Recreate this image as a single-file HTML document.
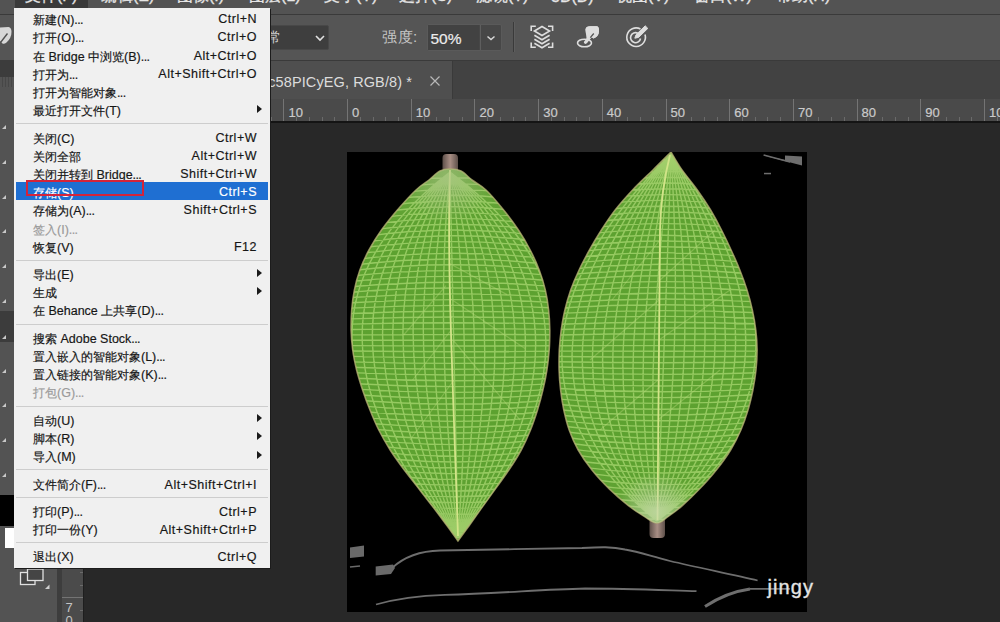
<!DOCTYPE html>
<html><head><meta charset="utf-8">
<style>
*{margin:0;padding:0;box-sizing:border-box}
html,body{width:1000px;height:622px;overflow:hidden;background:#282828;font-family:"Liberation Sans",sans-serif}
.a{position:absolute}
#menubar{left:0;top:0;width:1000px;height:15px;background:#535353;border-bottom:1px solid #3a3a3a}
#menubar span{position:absolute;top:-14px;font-size:16px;color:#e6e6e6;white-space:nowrap;-webkit-text-stroke:.3px #e6e6e6}
#opts{left:0;top:15px;width:1000px;height:45px;background:#555555}
#tabbar{left:62px;top:60px;width:938px;height:39px;background:#424242;border-top:1px solid #3a3a3a}
#tab{left:62px;top:61px;width:391px;height:38px;background:#4f4f4f;border-right:1px solid #3a3a3a}
#hruler{left:62px;top:99px;width:938px;height:24px;background:#4a4a4a;border-bottom:2px solid #141414;overflow:hidden}
.rl{position:absolute;top:6px;font-size:13px;color:#cbcbcb;-webkit-text-stroke:.2px #cbcbcb}
#toolbar{left:0;top:60px;width:57px;height:562px;background:#535353}
#tbhead{left:0;top:60px;width:57px;height:17px;background:#3c3c3c}
#vstrip{left:57px;top:60px;width:5px;height:562px;background:#3d3d3d}
#vruler{left:62px;top:122px;width:22px;height:500px;background:#4b4b4b;border-right:1px solid #1e1e1e;overflow:hidden}
.vl{position:absolute;left:2px;font-size:13px;line-height:13px;color:#c4c4c4;text-align:center;width:10px}
#canvas{left:347px;top:152px;width:460px;height:460px;background:#000;overflow:hidden}
#menu{left:14px;top:8px;width:256px;height:560px;background:#f0f0f0;box-shadow:1px 1px 0 #1c1c1c;font-size:12px;color:#161616;padding-top:1.3px}
.it{position:relative;height:18.2px;line-height:22px;padding-left:19px;white-space:nowrap;-webkit-text-stroke:.18px currentColor}
.it b{font-weight:normal;position:absolute;right:13px;top:-1px}
.it i{font-style:normal;font-size:12.5px}
.it b i{letter-spacing:.5px}
.it u{text-decoration:none;letter-spacing:-.6px}
.sep{height:9.2px;position:relative}
.sep:after{content:"";position:absolute;left:2px;right:2px;top:5px;height:1px;background:#cdcdcd}
.dis{color:#9a9a9a}
.hl{background:#1f6fd2;color:#fff;margin-left:2px;margin-right:2px;padding-left:17px}
.hl b{right:11px}
.lo b{top:0}
.arr{position:absolute;right:8px;top:4.5px;width:0;height:0;border-left:5px solid #1a1a1a;border-top:4px solid transparent;border-bottom:4px solid transparent}
.ico{position:absolute}
</style></head><body>
<div id="menubar" class="a">
 <div class="a" style="left:15px;top:0;width:73px;height:8px;background:#3a3a3a"></div>
 <span style="left:25px">文件(F)</span>
 <span style="left:101px">编辑(E)</span>
 <span style="left:177px">图像(I)</span>
 <span style="left:249px">图层(L)</span>
 <span style="left:324px">文字(Y)</span>
 <span style="left:399px">选择(S)</span>
 <span style="left:476px">滤镜(T)</span>
 <span style="left:551px;top:-12px">3D(D)</span>
 <span style="left:616px">视图(V)</span>
 <span style="left:694px">窗口(W)</span>
 <span style="left:776px">帮助(H)</span>
</div>
<div id="opts" class="a">
 <div class="a" style="left:200px;top:9.5px;width:129px;height:25px;background:#3e3e3e;border:1px solid #484848;border-radius:2px"></div>
 <span class="a" style="left:267px;top:14px;font-size:14px;color:#d0d0d0">常</span>
 <svg class="a" style="left:314px;top:19px" width="12" height="8" viewBox="0 0 12 8"><path d="M2,2 L6,6 L10,2" fill="none" stroke="#e0e0e0" stroke-width="1.6"/></svg>
 <span class="a" style="left:382px;top:13px;font-size:15px;color:#c8c8c8;letter-spacing:.5px">强度:</span>
 <div class="a" style="left:427px;top:9px;width:75px;height:27px;background:#474747;border:1px solid #5a5a5a;border-radius:2px"></div>
 <div class="a" style="left:428px;top:10px;width:51px;height:25px;background:#424242"></div>
 <div class="a" style="left:480px;top:10px;width:1px;height:25px;background:#5e5e5e"></div>
 <span class="a" style="left:430.5px;top:15px;font-size:15.5px;color:#ececec;-webkit-text-stroke:.2px #ececec">50%</span>
 <svg class="a" style="left:485px;top:19px" width="12" height="8" viewBox="0 0 12 8"><path d="M2.5,2.5 L6,5.5 L9.5,2.5" fill="none" stroke="#d8d8d8" stroke-width="1.5"/></svg>
 <div class="a" style="left:513px;top:7px;width:1px;height:30px;background:#3a3a3a"></div>
 <div class="a" style="left:514px;top:7px;width:1px;height:30px;background:#5e5e5e"></div>
</div>
<svg class="a" style="left:520px;top:18px" width="140" height="36" viewBox="520 18 140 36" fill="none" stroke="#dedede" stroke-width="1.6">
 <path d="M531.2,31 V26.3 H535.8 M548,26.3 H552.6 V31 M552.6,42.6 V47.3 H548 M535.8,47.3 H531.2 V42.6"/>
 <path d="M542,26.5 L549.6,31 L542,35.5 L534.4,31 Z"/>
 <path d="M534.4,35.2 L542,39.7 L549.6,35.2"/>
 <path d="M534.4,39.2 L542,43.7 L549.6,39.2"/>
 <path d="M534.4,43.2 L542,47.7 L549.6,43.2"/>
 <ellipse cx="584.5" cy="43" rx="7" ry="3.8"/>
 <path d="M585.5,29.5 Q586,26.3 590,26.3 L596.5,26.3 Q599.2,26.5 599,31 Q598.8,36.5 593.5,38.5 L591.5,37 L587,42.8" fill="#dedede" stroke="none"/>
 <path d="M585.5,29.5 Q586,26.3 590,26.3 L596.5,26.3 Q599.2,26.5 599,31 Q598.8,36.5 593.5,38.5 Q590,36 586,34 Z" fill="#dedede" stroke="none"/>
 <path d="M594.5,31.5 L585.5,42.3" stroke-width="3.2" stroke-linecap="round"/>
 <path d="M590.3,37.6 Q592.5,35 593.8,33.5" stroke="#535353" stroke-width="1.2"/>
 <path d="M640.5,29 A9.3,9.3 0 1 0 645,34.5"/>
 <path d="M637.8,33.2 A5,5 0 1 0 640.5,38.5"/>
 <path d="M634.8,38.2 L636,34.8 L645.2,25.8 L647.8,28.4 L638.6,37.4 Z" fill="#dedede" stroke-width="1"/>
</svg>
<div id="tabbar" class="a"></div>
<div id="tab" class="a">
 <span class="a" style="right:40px;top:12.5px;font-size:14.5px;color:#dcdcdc;letter-spacing:.1px;white-space:nowrap">20180502c58PICyEG, RGB/8) *</span>
 <svg class="a" style="left:367px;top:14px" width="12" height="12" viewBox="0 0 12 12"><path d="M1.5,1.5 L10.5,10.5 M10.5,1.5 L1.5,10.5" stroke="#b8b8b8" stroke-width="1.2"/></svg>
</div>
<div id="hruler" class="a">
<div class="a" style="left:208.67px;top:18px;width:1px;height:4px;background:#6a6a6a"></div>
<div class="a" style="left:221.41px;top:0;width:1px;height:22px;background:#747474"></div>
<span class="rl" style="left:226.41px">10</span>
<div class="a" style="left:234.15px;top:18px;width:1px;height:4px;background:#6a6a6a"></div>
<div class="a" style="left:246.89px;top:18px;width:1px;height:4px;background:#6a6a6a"></div>
<div class="a" style="left:259.62px;top:18px;width:1px;height:4px;background:#6a6a6a"></div>
<div class="a" style="left:272.36px;top:18px;width:1px;height:4px;background:#6a6a6a"></div>
<div class="a" style="left:285.10px;top:0;width:1px;height:22px;background:#747474"></div>
<span class="rl" style="left:290.10px">0</span>
<div class="a" style="left:297.84px;top:18px;width:1px;height:4px;background:#6a6a6a"></div>
<div class="a" style="left:310.58px;top:18px;width:1px;height:4px;background:#6a6a6a"></div>
<div class="a" style="left:323.31px;top:18px;width:1px;height:4px;background:#6a6a6a"></div>
<div class="a" style="left:336.05px;top:18px;width:1px;height:4px;background:#6a6a6a"></div>
<div class="a" style="left:348.79px;top:0;width:1px;height:22px;background:#747474"></div>
<span class="rl" style="left:353.79px">10</span>
<div class="a" style="left:361.53px;top:18px;width:1px;height:4px;background:#6a6a6a"></div>
<div class="a" style="left:374.27px;top:18px;width:1px;height:4px;background:#6a6a6a"></div>
<div class="a" style="left:387.00px;top:18px;width:1px;height:4px;background:#6a6a6a"></div>
<div class="a" style="left:399.74px;top:18px;width:1px;height:4px;background:#6a6a6a"></div>
<div class="a" style="left:412.48px;top:0;width:1px;height:22px;background:#747474"></div>
<span class="rl" style="left:417.48px">20</span>
<div class="a" style="left:425.22px;top:18px;width:1px;height:4px;background:#6a6a6a"></div>
<div class="a" style="left:437.96px;top:18px;width:1px;height:4px;background:#6a6a6a"></div>
<div class="a" style="left:450.69px;top:18px;width:1px;height:4px;background:#6a6a6a"></div>
<div class="a" style="left:463.43px;top:18px;width:1px;height:4px;background:#6a6a6a"></div>
<div class="a" style="left:476.17px;top:0;width:1px;height:22px;background:#747474"></div>
<span class="rl" style="left:481.17px">30</span>
<div class="a" style="left:488.91px;top:18px;width:1px;height:4px;background:#6a6a6a"></div>
<div class="a" style="left:501.65px;top:18px;width:1px;height:4px;background:#6a6a6a"></div>
<div class="a" style="left:514.38px;top:18px;width:1px;height:4px;background:#6a6a6a"></div>
<div class="a" style="left:527.12px;top:18px;width:1px;height:4px;background:#6a6a6a"></div>
<div class="a" style="left:539.86px;top:0;width:1px;height:22px;background:#747474"></div>
<span class="rl" style="left:544.86px">40</span>
<div class="a" style="left:552.60px;top:18px;width:1px;height:4px;background:#6a6a6a"></div>
<div class="a" style="left:565.34px;top:18px;width:1px;height:4px;background:#6a6a6a"></div>
<div class="a" style="left:578.07px;top:18px;width:1px;height:4px;background:#6a6a6a"></div>
<div class="a" style="left:590.81px;top:18px;width:1px;height:4px;background:#6a6a6a"></div>
<div class="a" style="left:603.55px;top:0;width:1px;height:22px;background:#747474"></div>
<span class="rl" style="left:608.55px">50</span>
<div class="a" style="left:616.29px;top:18px;width:1px;height:4px;background:#6a6a6a"></div>
<div class="a" style="left:629.03px;top:18px;width:1px;height:4px;background:#6a6a6a"></div>
<div class="a" style="left:641.76px;top:18px;width:1px;height:4px;background:#6a6a6a"></div>
<div class="a" style="left:654.50px;top:18px;width:1px;height:4px;background:#6a6a6a"></div>
<div class="a" style="left:667.24px;top:0;width:1px;height:22px;background:#747474"></div>
<span class="rl" style="left:672.24px">60</span>
<div class="a" style="left:679.98px;top:18px;width:1px;height:4px;background:#6a6a6a"></div>
<div class="a" style="left:692.72px;top:18px;width:1px;height:4px;background:#6a6a6a"></div>
<div class="a" style="left:705.45px;top:18px;width:1px;height:4px;background:#6a6a6a"></div>
<div class="a" style="left:718.19px;top:18px;width:1px;height:4px;background:#6a6a6a"></div>
<div class="a" style="left:730.93px;top:0;width:1px;height:22px;background:#747474"></div>
<span class="rl" style="left:735.93px">70</span>
<div class="a" style="left:743.67px;top:18px;width:1px;height:4px;background:#6a6a6a"></div>
<div class="a" style="left:756.41px;top:18px;width:1px;height:4px;background:#6a6a6a"></div>
<div class="a" style="left:769.14px;top:18px;width:1px;height:4px;background:#6a6a6a"></div>
<div class="a" style="left:781.88px;top:18px;width:1px;height:4px;background:#6a6a6a"></div>
<div class="a" style="left:794.62px;top:0;width:1px;height:22px;background:#747474"></div>
<span class="rl" style="left:799.62px">80</span>
<div class="a" style="left:807.36px;top:18px;width:1px;height:4px;background:#6a6a6a"></div>
<div class="a" style="left:820.10px;top:18px;width:1px;height:4px;background:#6a6a6a"></div>
<div class="a" style="left:832.83px;top:18px;width:1px;height:4px;background:#6a6a6a"></div>
<div class="a" style="left:845.57px;top:18px;width:1px;height:4px;background:#6a6a6a"></div>
<div class="a" style="left:858.31px;top:0;width:1px;height:22px;background:#747474"></div>
<span class="rl" style="left:863.31px">90</span>
<div class="a" style="left:871.05px;top:18px;width:1px;height:4px;background:#6a6a6a"></div>
<div class="a" style="left:883.79px;top:18px;width:1px;height:4px;background:#6a6a6a"></div>
<div class="a" style="left:896.52px;top:18px;width:1px;height:4px;background:#6a6a6a"></div>
<div class="a" style="left:909.26px;top:18px;width:1px;height:4px;background:#6a6a6a"></div>
<div class="a" style="left:922.00px;top:0;width:1px;height:22px;background:#747474"></div>
<span class="rl" style="left:927.00px">100</span>
<div class="a" style="left:934.74px;top:18px;width:1px;height:4px;background:#6a6a6a"></div>
</div>
<div id="toolbar" class="a"></div>
<div id="tbhead" class="a"></div>
<div class="a" style="left:0;top:77px;width:14px;height:10px;background:repeating-linear-gradient(90deg,#535353 0 2px,#474747 2px 3px)"></div>
<div class="a" style="left:0;top:311px;width:40px;height:31px;background:#3c3c3c"></div>
<div class="a" style="left:2px;top:125px;width:0;height:0;border-left:4px solid transparent;border-bottom:4px solid #c8c8c8"></div><div class="a" style="left:2px;top:160px;width:0;height:0;border-left:4px solid transparent;border-bottom:4px solid #c8c8c8"></div><div class="a" style="left:2px;top:195px;width:0;height:0;border-left:4px solid transparent;border-bottom:4px solid #c8c8c8"></div><div class="a" style="left:2px;top:229px;width:0;height:0;border-left:4px solid transparent;border-bottom:4px solid #c8c8c8"></div><div class="a" style="left:2px;top:264px;width:0;height:0;border-left:4px solid transparent;border-bottom:4px solid #c8c8c8"></div><div class="a" style="left:2px;top:299px;width:0;height:0;border-left:4px solid transparent;border-bottom:4px solid #c8c8c8"></div><div class="a" style="left:2px;top:335px;width:0;height:0;border-left:4px solid transparent;border-bottom:4px solid #c8c8c8"></div><div class="a" style="left:2px;top:369px;width:0;height:0;border-left:4px solid transparent;border-bottom:4px solid #c8c8c8"></div><div class="a" style="left:2px;top:403px;width:0;height:0;border-left:4px solid transparent;border-bottom:4px solid #c8c8c8"></div><div class="a" style="left:2px;top:438px;width:0;height:0;border-left:4px solid transparent;border-bottom:4px solid #c8c8c8"></div><div class="a" style="left:2px;top:473px;width:0;height:0;border-left:4px solid transparent;border-bottom:4px solid #c8c8c8"></div>
<div class="a" style="left:0;top:495px;width:40px;height:31px;background:#000"></div>
<div class="a" style="left:5px;top:528px;width:30px;height:20px;background:#fff"></div>
<svg class="a" style="left:18px;top:566px" width="34" height="26" viewBox="18 566 34 26">
 <rect x="20.5" y="572.5" width="14.5" height="12" fill="#454545" stroke="#e0e0e0" stroke-width="1.3"/>
 <rect x="27.5" y="569" width="15.5" height="11.5" fill="#454545" stroke="#e0e0e0" stroke-width="1.3"/>
 <path d="M45,589 L49.5,589 L49.5,584.5 Z" fill="#d0d0d0"/>
</svg>
<svg class="a" style="left:0;top:24px" width="14" height="24" viewBox="0 24 14 24">
 <path d="M0,27.5 L8.5,27 Q11.5,27.5 11.5,32 Q11.5,38 6.5,42.5 Q4,44.5 2.5,43.5 L0,41 Z" fill="#d8d8d8"/>
 <path d="M0.5,42.5 Q4,38 7.5,33.5" stroke="#505050" stroke-width="1.4" fill="none"/>
</svg>
<div id="vstrip" class="a"></div>
<div id="vruler" class="a">
<div class="a" style="top:4.02px;left:18px;height:1px;width:4px;background:#6a6a6a"></div>
<div class="a" style="top:16.76px;left:18px;height:1px;width:4px;background:#6a6a6a"></div>
<div class="a" style="top:29.50px;left:0;height:1px;width:22px;background:#747474"></div>
<div class="vl" style="top:33.00px">0</div>
<div class="a" style="top:42.24px;left:18px;height:1px;width:4px;background:#6a6a6a"></div>
<div class="a" style="top:54.98px;left:18px;height:1px;width:4px;background:#6a6a6a"></div>
<div class="a" style="top:67.71px;left:18px;height:1px;width:4px;background:#6a6a6a"></div>
<div class="a" style="top:80.45px;left:18px;height:1px;width:4px;background:#6a6a6a"></div>
<div class="a" style="top:93.19px;left:0;height:1px;width:22px;background:#747474"></div>
<div class="vl" style="top:96.69px">1<br>0</div>
<div class="a" style="top:105.93px;left:18px;height:1px;width:4px;background:#6a6a6a"></div>
<div class="a" style="top:118.67px;left:18px;height:1px;width:4px;background:#6a6a6a"></div>
<div class="a" style="top:131.40px;left:18px;height:1px;width:4px;background:#6a6a6a"></div>
<div class="a" style="top:144.14px;left:18px;height:1px;width:4px;background:#6a6a6a"></div>
<div class="a" style="top:156.88px;left:0;height:1px;width:22px;background:#747474"></div>
<div class="vl" style="top:160.38px">2<br>0</div>
<div class="a" style="top:169.62px;left:18px;height:1px;width:4px;background:#6a6a6a"></div>
<div class="a" style="top:182.36px;left:18px;height:1px;width:4px;background:#6a6a6a"></div>
<div class="a" style="top:195.09px;left:18px;height:1px;width:4px;background:#6a6a6a"></div>
<div class="a" style="top:207.83px;left:18px;height:1px;width:4px;background:#6a6a6a"></div>
<div class="a" style="top:220.57px;left:0;height:1px;width:22px;background:#747474"></div>
<div class="vl" style="top:224.07px">3<br>0</div>
<div class="a" style="top:233.31px;left:18px;height:1px;width:4px;background:#6a6a6a"></div>
<div class="a" style="top:246.05px;left:18px;height:1px;width:4px;background:#6a6a6a"></div>
<div class="a" style="top:258.78px;left:18px;height:1px;width:4px;background:#6a6a6a"></div>
<div class="a" style="top:271.52px;left:18px;height:1px;width:4px;background:#6a6a6a"></div>
<div class="a" style="top:284.26px;left:0;height:1px;width:22px;background:#747474"></div>
<div class="vl" style="top:287.76px">4<br>0</div>
<div class="a" style="top:297.00px;left:18px;height:1px;width:4px;background:#6a6a6a"></div>
<div class="a" style="top:309.74px;left:18px;height:1px;width:4px;background:#6a6a6a"></div>
<div class="a" style="top:322.47px;left:18px;height:1px;width:4px;background:#6a6a6a"></div>
<div class="a" style="top:335.21px;left:18px;height:1px;width:4px;background:#6a6a6a"></div>
<div class="a" style="top:347.95px;left:0;height:1px;width:22px;background:#747474"></div>
<div class="vl" style="top:351.45px">5<br>0</div>
<div class="a" style="top:360.69px;left:18px;height:1px;width:4px;background:#6a6a6a"></div>
<div class="a" style="top:373.43px;left:18px;height:1px;width:4px;background:#6a6a6a"></div>
<div class="a" style="top:386.16px;left:18px;height:1px;width:4px;background:#6a6a6a"></div>
<div class="a" style="top:398.90px;left:18px;height:1px;width:4px;background:#6a6a6a"></div>
<div class="a" style="top:411.64px;left:0;height:1px;width:22px;background:#747474"></div>
<div class="vl" style="top:415.14px">6<br>0</div>
<div class="a" style="top:424.38px;left:18px;height:1px;width:4px;background:#6a6a6a"></div>
<div class="a" style="top:437.12px;left:18px;height:1px;width:4px;background:#6a6a6a"></div>
<div class="a" style="top:449.85px;left:18px;height:1px;width:4px;background:#6a6a6a"></div>
<div class="a" style="top:462.59px;left:18px;height:1px;width:4px;background:#6a6a6a"></div>
<div class="a" style="top:475.33px;left:0;height:1px;width:22px;background:#747474"></div>
<div class="vl" style="top:478.83px">7<br>0</div>
<div class="a" style="top:488.07px;left:18px;height:1px;width:4px;background:#6a6a6a"></div>
</div>
<div id="canvas" class="a"></div>
<svg class="a" style="left:347px;top:152px" width="460" height="460" viewBox="347 152 460 460">
<defs>
<pattern id="grid" width="10" height="6" patternUnits="userSpaceOnUse">
<rect width="10" height="6" fill="#61a532"/>
<rect y="0" width="10" height="1.5" fill="#9dcf62" opacity=".85"/>
<rect x="0" width="1.5" height="6" fill="#9dcf62" opacity=".85"/>
</pattern>
<linearGradient id="stem" x1="0" x2="1" y1="0" y2="0">
<stop offset="0" stop-color="#5e504a"/><stop offset=".5" stop-color="#a88e84"/><stop offset="1" stop-color="#5e504a"/>
</linearGradient>
<radialGradient id="shadeL" cx="450" cy="350" r="200" gradientUnits="userSpaceOnUse">
<stop offset=".6" stop-color="#3a7a20" stop-opacity=".06"/><stop offset="1" stop-color="#c8d890" stop-opacity=".25"/>
</radialGradient>
<radialGradient id="shadeR" cx="658" cy="350" r="200" gradientUnits="userSpaceOnUse">
<stop offset=".6" stop-color="#3a7a20" stop-opacity=".06"/><stop offset="1" stop-color="#c8d890" stop-opacity=".25"/>
</radialGradient>
<radialGradient id="hazeT" cx="447" cy="178" r="45" gradientUnits="userSpaceOnUse">
<stop offset="0" stop-color="#a8c088" stop-opacity=".6"/><stop offset="1" stop-color="#a8c088" stop-opacity="0"/>
</radialGradient>
<radialGradient id="hazeB" cx="656" cy="512" r="40" gradientUnits="userSpaceOnUse">
<stop offset="0" stop-color="#c8d8b0" stop-opacity=".7"/><stop offset="1" stop-color="#c8d8b0" stop-opacity="0"/>
</radialGradient>
<clipPath id="cL"><path d="M450.0,169.0 C453.5,169.0 457.3,169.2 461.0,171.0 C464.7,172.8 467.8,176.8 472.0,180.0 C476.2,183.2 480.7,185.0 486.0,190.0 C491.3,195.0 498.2,203.3 503.6,210.0 C509.0,216.7 514.0,223.3 518.4,230.0 C522.9,236.7 526.7,243.3 530.2,250.0 C533.7,256.7 536.7,263.3 539.2,270.0 C541.7,276.7 543.8,283.3 545.3,290.0 C546.9,296.7 547.9,303.3 548.6,310.0 C549.4,316.7 549.7,323.3 549.8,330.0 C549.8,336.7 549.7,343.3 549.2,350.0 C548.7,356.7 548.0,363.3 546.9,370.0 C545.9,376.7 544.5,383.3 542.9,390.0 C541.3,396.7 539.5,403.3 537.5,410.0 C535.4,416.7 533.2,423.3 530.5,430.0 C527.8,436.7 524.8,443.3 521.2,450.0 C517.6,456.7 513.3,463.4 508.8,470.0 C504.4,476.6 499.4,483.4 494.7,489.9 C490.1,496.4 485.3,502.9 481.0,508.9 C476.7,515.0 472.7,520.7 468.9,526.0 C465.0,531.3 459.8,538.5 458.0,541.0 C456.2,538.5 451.2,531.3 447.3,526.0 C443.4,520.7 439.2,515.0 434.6,508.9 C430.0,502.9 424.9,496.4 419.8,489.9 C414.8,483.4 409.3,476.6 404.3,470.0 C399.4,463.4 394.5,456.7 390.2,450.0 C386.0,443.3 382.2,436.7 378.8,430.0 C375.4,423.3 372.7,416.7 370.0,410.0 C367.2,403.3 364.8,396.7 362.6,390.0 C360.4,383.3 358.3,376.7 356.6,370.0 C355.0,363.3 353.6,356.7 352.7,350.0 C351.8,343.3 351.3,336.7 351.1,330.0 C351.0,323.3 351.2,316.7 351.7,310.0 C352.2,303.3 353.0,296.7 354.4,290.0 C355.7,283.3 357.5,276.7 359.9,270.0 C362.3,263.3 365.4,256.7 369.0,250.0 C372.6,243.3 376.7,236.7 381.5,230.0 C386.2,223.3 391.7,216.7 397.4,210.0 C403.2,203.3 410.7,195.0 416.0,190.0 C421.3,185.0 425.0,183.2 429.0,180.0 C433.0,176.8 436.5,172.8 440.0,171.0 C443.5,169.2 446.5,169.0 450.0,169.0 Z"/></clipPath><clipPath id="cR"><path d="M671.0,152.0 C672.8,155.0 677.6,163.7 682.0,170.0 C686.4,176.3 692.6,183.3 697.3,190.0 C702.1,196.7 706.5,203.3 710.6,210.0 C714.6,216.7 718.1,223.3 721.5,230.0 C724.9,236.7 728.1,243.3 731.1,250.0 C734.2,256.7 737.2,263.3 739.8,270.0 C742.5,276.7 744.9,283.3 747.0,290.0 C749.1,296.7 750.9,303.3 752.3,310.0 C753.8,316.7 755.0,323.3 755.8,330.0 C756.6,336.7 757.1,343.3 757.1,350.0 C757.1,356.7 756.7,363.3 756.0,370.0 C755.3,376.7 754.2,383.3 752.9,390.0 C751.5,396.7 750.0,403.3 748.0,410.0 C746.0,416.7 743.8,423.3 740.9,430.0 C738.0,436.7 734.7,443.3 730.6,450.0 C726.5,456.7 721.6,463.4 716.3,470.0 C711.1,476.6 704.9,483.4 699.2,489.3 C693.6,495.2 687.5,501.0 682.3,505.6 C677.2,510.1 672.5,513.5 668.3,516.4 C664.1,519.3 661.0,523.0 657.0,523.0 C653.0,523.0 649.0,519.3 644.2,516.4 C639.5,513.5 634.2,510.1 628.4,505.6 C622.7,501.0 615.9,495.2 609.8,489.3 C603.7,483.4 597.2,476.6 592.0,470.0 C586.7,463.4 582.0,456.7 578.2,450.0 C574.4,443.3 571.6,436.7 569.2,430.0 C566.8,423.3 565.3,416.7 563.8,410.0 C562.4,403.3 561.4,396.7 560.6,390.0 C559.8,383.3 559.3,376.7 559.1,370.0 C558.9,363.3 559.0,356.7 559.3,350.0 C559.7,343.3 560.3,336.7 561.2,330.0 C562.2,323.3 563.3,316.7 564.9,310.0 C566.5,303.3 568.4,296.7 570.7,290.0 C573.1,283.3 575.9,276.7 579.1,270.0 C582.2,263.3 585.8,256.7 589.5,250.0 C593.2,243.3 597.1,236.7 601.4,230.0 C605.7,223.3 610.1,216.7 615.2,210.0 C620.4,203.3 626.3,196.7 632.6,190.0 C638.9,183.3 646.6,176.3 653.0,170.0 C659.4,163.7 668.0,155.0 671.0,152.0 Z"/></clipPath>
</defs>
<rect x="442.5" y="154" width="15.5" height="20" rx="4" fill="url(#stem)"/>
<rect x="649.5" y="510" width="15.5" height="28" rx="4" fill="url(#stem)"/>
<path d="M450.0,169.0 C453.5,169.0 457.3,169.2 461.0,171.0 C464.7,172.8 467.8,176.8 472.0,180.0 C476.2,183.2 480.7,185.0 486.0,190.0 C491.3,195.0 498.2,203.3 503.6,210.0 C509.0,216.7 514.0,223.3 518.4,230.0 C522.9,236.7 526.7,243.3 530.2,250.0 C533.7,256.7 536.7,263.3 539.2,270.0 C541.7,276.7 543.8,283.3 545.3,290.0 C546.9,296.7 547.9,303.3 548.6,310.0 C549.4,316.7 549.7,323.3 549.8,330.0 C549.8,336.7 549.7,343.3 549.2,350.0 C548.7,356.7 548.0,363.3 546.9,370.0 C545.9,376.7 544.5,383.3 542.9,390.0 C541.3,396.7 539.5,403.3 537.5,410.0 C535.4,416.7 533.2,423.3 530.5,430.0 C527.8,436.7 524.8,443.3 521.2,450.0 C517.6,456.7 513.3,463.4 508.8,470.0 C504.4,476.6 499.4,483.4 494.7,489.9 C490.1,496.4 485.3,502.9 481.0,508.9 C476.7,515.0 472.7,520.7 468.9,526.0 C465.0,531.3 459.8,538.5 458.0,541.0 C456.2,538.5 451.2,531.3 447.3,526.0 C443.4,520.7 439.2,515.0 434.6,508.9 C430.0,502.9 424.9,496.4 419.8,489.9 C414.8,483.4 409.3,476.6 404.3,470.0 C399.4,463.4 394.5,456.7 390.2,450.0 C386.0,443.3 382.2,436.7 378.8,430.0 C375.4,423.3 372.7,416.7 370.0,410.0 C367.2,403.3 364.8,396.7 362.6,390.0 C360.4,383.3 358.3,376.7 356.6,370.0 C355.0,363.3 353.6,356.7 352.7,350.0 C351.8,343.3 351.3,336.7 351.1,330.0 C351.0,323.3 351.2,316.7 351.7,310.0 C352.2,303.3 353.0,296.7 354.4,290.0 C355.7,283.3 357.5,276.7 359.9,270.0 C362.3,263.3 365.4,256.7 369.0,250.0 C372.6,243.3 376.7,236.7 381.5,230.0 C386.2,223.3 391.7,216.7 397.4,210.0 C403.2,203.3 410.7,195.0 416.0,190.0 C421.3,185.0 425.0,183.2 429.0,180.0 C433.0,176.8 436.5,172.8 440.0,171.0 C443.5,169.2 446.5,169.0 450.0,169.0 Z" fill="#5fa431"/>
<path d="M450.0,172.0Q250.0,325.0 458.0,538.0 M450.0,172.0Q270.4,325.0 458.0,538.0 M450.0,172.0Q290.8,325.0 458.0,538.0 M450.0,172.0Q311.2,325.0 458.0,538.0 M450.0,172.0Q331.6,325.0 458.0,538.0 M450.0,172.0Q352.0,325.0 458.0,538.0 M450.0,172.0Q372.4,325.0 458.0,538.0 M450.0,172.0Q392.8,325.0 458.0,538.0 M450.0,172.0Q413.2,325.0 458.0,538.0 M450.0,172.0Q433.6,325.0 458.0,538.0 M450.0,172.0Q454.0,325.0 458.0,538.0 M450.0,172.0Q474.4,325.0 458.0,538.0 M450.0,172.0Q494.8,325.0 458.0,538.0 M450.0,172.0Q515.2,325.0 458.0,538.0 M450.0,172.0Q535.6,325.0 458.0,538.0 M450.0,172.0Q556.0,325.0 458.0,538.0 M450.0,172.0Q576.4,325.0 458.0,538.0 M450.0,172.0Q596.8,325.0 458.0,538.0 M450.0,172.0Q617.2,325.0 458.0,538.0 M450.0,172.0Q637.6,325.0 458.0,538.0 M450.0,172.0Q658.0,325.0 458.0,538.0 M334.0,195.2Q454.0,160.4 574.0,195.2 M334.0,200.4Q454.0,166.8 574.0,200.4 M334.0,205.5Q454.0,173.3 574.0,205.5 M334.0,210.7Q454.0,179.7 574.0,210.7 M334.0,215.9Q454.0,186.1 574.0,215.9 M334.0,221.1Q454.0,192.5 574.0,221.1 M334.0,226.3Q454.0,199.0 574.0,226.3 M334.0,231.4Q454.0,205.4 574.0,231.4 M334.0,236.6Q454.0,211.8 574.0,236.6 M334.0,241.8Q454.0,218.2 574.0,241.8 M334.0,247.0Q454.0,224.6 574.0,247.0 M334.0,252.1Q454.0,231.1 574.0,252.1 M334.0,257.3Q454.0,237.5 574.0,257.3 M334.0,262.5Q454.0,243.9 574.0,262.5 M334.0,267.7Q454.0,250.3 574.0,267.7 M334.0,272.9Q454.0,256.7 574.0,272.9 M334.0,278.0Q454.0,263.2 574.0,278.0 M334.0,283.2Q454.0,269.6 574.0,283.2 M334.0,288.4Q454.0,276.0 574.0,288.4 M334.0,293.6Q454.0,282.4 574.0,293.6 M334.0,298.8Q454.0,288.9 574.0,298.8 M334.0,303.9Q454.0,295.3 574.0,303.9 M334.0,309.1Q454.0,301.7 574.0,309.1 M334.0,314.3Q454.0,308.1 574.0,314.3 M334.0,319.5Q454.0,314.5 574.0,319.5 M334.0,324.6Q454.0,321.0 574.0,324.6 M334.0,329.8Q454.0,327.4 574.0,329.8 M334.0,335.0Q454.0,333.8 574.0,335.0 M334.0,340.2Q454.0,340.2 574.0,340.2 M334.0,345.5Q454.0,346.5 574.0,345.5 M334.0,350.7Q454.0,352.9 574.0,350.7 M334.0,356.0Q454.0,359.2 574.0,356.0 M334.0,361.3Q454.0,365.5 574.0,361.3 M334.0,366.5Q454.0,371.9 574.0,366.5 M334.0,371.8Q454.0,378.2 574.0,371.8 M334.0,377.1Q454.0,384.5 574.0,377.1 M334.0,382.4Q454.0,390.8 574.0,382.4 M334.0,387.6Q454.0,397.2 574.0,387.6 M334.0,392.9Q454.0,403.5 574.0,392.9 M334.0,398.2Q454.0,409.8 574.0,398.2 M334.0,403.5Q454.0,416.1 574.0,403.5 M334.0,408.7Q454.0,422.5 574.0,408.7 M334.0,414.0Q454.0,428.8 574.0,414.0 M334.0,419.3Q454.0,435.1 574.0,419.3 M334.0,424.5Q454.0,441.5 574.0,424.5 M334.0,429.8Q454.0,447.8 574.0,429.8 M334.0,435.1Q454.0,454.1 574.0,435.1 M334.0,440.4Q454.0,460.4 574.0,440.4 M334.0,445.6Q454.0,466.8 574.0,445.6 M334.0,450.9Q454.0,473.1 574.0,450.9 M334.0,456.2Q454.0,479.4 574.0,456.2 M334.0,461.5Q454.0,485.7 574.0,461.5 M334.0,466.7Q454.0,492.1 574.0,466.7 M334.0,472.0Q454.0,498.4 574.0,472.0 M334.0,477.3Q454.0,504.7 574.0,477.3 M334.0,482.5Q454.0,511.1 574.0,482.5 M334.0,487.8Q454.0,517.4 574.0,487.8 M334.0,493.1Q454.0,523.7 574.0,493.1 M334.0,498.4Q454.0,530.0 574.0,498.4 M334.0,503.6Q454.0,536.4 574.0,503.6 M334.0,508.9Q454.0,542.7 574.0,508.9 M334.0,514.2Q454.0,549.0 574.0,514.2 M334.0,519.5Q454.0,555.3 574.0,519.5" clip-path="url(#cL)" fill="none" stroke="#a2d46a" stroke-width="1.4" stroke-opacity=".9"/>
<path d="M450.0,169.0 C453.5,169.0 457.3,169.2 461.0,171.0 C464.7,172.8 467.8,176.8 472.0,180.0 C476.2,183.2 480.7,185.0 486.0,190.0 C491.3,195.0 498.2,203.3 503.6,210.0 C509.0,216.7 514.0,223.3 518.4,230.0 C522.9,236.7 526.7,243.3 530.2,250.0 C533.7,256.7 536.7,263.3 539.2,270.0 C541.7,276.7 543.8,283.3 545.3,290.0 C546.9,296.7 547.9,303.3 548.6,310.0 C549.4,316.7 549.7,323.3 549.8,330.0 C549.8,336.7 549.7,343.3 549.2,350.0 C548.7,356.7 548.0,363.3 546.9,370.0 C545.9,376.7 544.5,383.3 542.9,390.0 C541.3,396.7 539.5,403.3 537.5,410.0 C535.4,416.7 533.2,423.3 530.5,430.0 C527.8,436.7 524.8,443.3 521.2,450.0 C517.6,456.7 513.3,463.4 508.8,470.0 C504.4,476.6 499.4,483.4 494.7,489.9 C490.1,496.4 485.3,502.9 481.0,508.9 C476.7,515.0 472.7,520.7 468.9,526.0 C465.0,531.3 459.8,538.5 458.0,541.0 C456.2,538.5 451.2,531.3 447.3,526.0 C443.4,520.7 439.2,515.0 434.6,508.9 C430.0,502.9 424.9,496.4 419.8,489.9 C414.8,483.4 409.3,476.6 404.3,470.0 C399.4,463.4 394.5,456.7 390.2,450.0 C386.0,443.3 382.2,436.7 378.8,430.0 C375.4,423.3 372.7,416.7 370.0,410.0 C367.2,403.3 364.8,396.7 362.6,390.0 C360.4,383.3 358.3,376.7 356.6,370.0 C355.0,363.3 353.6,356.7 352.7,350.0 C351.8,343.3 351.3,336.7 351.1,330.0 C351.0,323.3 351.2,316.7 351.7,310.0 C352.2,303.3 353.0,296.7 354.4,290.0 C355.7,283.3 357.5,276.7 359.9,270.0 C362.3,263.3 365.4,256.7 369.0,250.0 C372.6,243.3 376.7,236.7 381.5,230.0 C386.2,223.3 391.7,216.7 397.4,210.0 C403.2,203.3 410.7,195.0 416.0,190.0 C421.3,185.0 425.0,183.2 429.0,180.0 C433.0,176.8 436.5,172.8 440.0,171.0 C443.5,169.2 446.5,169.0 450.0,169.0 Z" fill="url(#shadeL)" stroke="#b3b070" stroke-width="1.6" stroke-opacity=".8"/>
<path d="M671.0,152.0 C672.8,155.0 677.6,163.7 682.0,170.0 C686.4,176.3 692.6,183.3 697.3,190.0 C702.1,196.7 706.5,203.3 710.6,210.0 C714.6,216.7 718.1,223.3 721.5,230.0 C724.9,236.7 728.1,243.3 731.1,250.0 C734.2,256.7 737.2,263.3 739.8,270.0 C742.5,276.7 744.9,283.3 747.0,290.0 C749.1,296.7 750.9,303.3 752.3,310.0 C753.8,316.7 755.0,323.3 755.8,330.0 C756.6,336.7 757.1,343.3 757.1,350.0 C757.1,356.7 756.7,363.3 756.0,370.0 C755.3,376.7 754.2,383.3 752.9,390.0 C751.5,396.7 750.0,403.3 748.0,410.0 C746.0,416.7 743.8,423.3 740.9,430.0 C738.0,436.7 734.7,443.3 730.6,450.0 C726.5,456.7 721.6,463.4 716.3,470.0 C711.1,476.6 704.9,483.4 699.2,489.3 C693.6,495.2 687.5,501.0 682.3,505.6 C677.2,510.1 672.5,513.5 668.3,516.4 C664.1,519.3 661.0,523.0 657.0,523.0 C653.0,523.0 649.0,519.3 644.2,516.4 C639.5,513.5 634.2,510.1 628.4,505.6 C622.7,501.0 615.9,495.2 609.8,489.3 C603.7,483.4 597.2,476.6 592.0,470.0 C586.7,463.4 582.0,456.7 578.2,450.0 C574.4,443.3 571.6,436.7 569.2,430.0 C566.8,423.3 565.3,416.7 563.8,410.0 C562.4,403.3 561.4,396.7 560.6,390.0 C559.8,383.3 559.3,376.7 559.1,370.0 C558.9,363.3 559.0,356.7 559.3,350.0 C559.7,343.3 560.3,336.7 561.2,330.0 C562.2,323.3 563.3,316.7 564.9,310.0 C566.5,303.3 568.4,296.7 570.7,290.0 C573.1,283.3 575.9,276.7 579.1,270.0 C582.2,263.3 585.8,256.7 589.5,250.0 C593.2,243.3 597.1,236.7 601.4,230.0 C605.7,223.3 610.1,216.7 615.2,210.0 C620.4,203.3 626.3,196.7 632.6,190.0 C638.9,183.3 646.6,176.3 653.0,170.0 C659.4,163.7 668.0,155.0 671.0,152.0 Z" fill="#5fa431"/>
<path d="M671.0,154.0Q460.0,362.5 657.0,521.0 M671.0,154.0Q480.4,362.5 657.0,521.0 M671.0,154.0Q500.8,362.5 657.0,521.0 M671.0,154.0Q521.2,362.5 657.0,521.0 M671.0,154.0Q541.6,362.5 657.0,521.0 M671.0,154.0Q562.0,362.5 657.0,521.0 M671.0,154.0Q582.4,362.5 657.0,521.0 M671.0,154.0Q602.8,362.5 657.0,521.0 M671.0,154.0Q623.2,362.5 657.0,521.0 M671.0,154.0Q643.6,362.5 657.0,521.0 M671.0,154.0Q664.0,362.5 657.0,521.0 M671.0,154.0Q684.4,362.5 657.0,521.0 M671.0,154.0Q704.8,362.5 657.0,521.0 M671.0,154.0Q725.2,362.5 657.0,521.0 M671.0,154.0Q745.6,362.5 657.0,521.0 M671.0,154.0Q766.0,362.5 657.0,521.0 M671.0,154.0Q786.4,362.5 657.0,521.0 M671.0,154.0Q806.8,362.5 657.0,521.0 M671.0,154.0Q827.2,362.5 657.0,521.0 M671.0,154.0Q847.6,362.5 657.0,521.0 M671.0,154.0Q868.0,362.5 657.0,521.0 M544.0,177.3Q664.0,142.3 784.0,177.3 M544.0,182.5Q664.0,148.7 784.0,182.5 M544.0,187.8Q664.0,155.0 784.0,187.8 M544.0,193.1Q664.0,161.3 784.0,193.1 M544.0,198.3Q664.0,167.7 784.0,198.3 M544.0,203.6Q664.0,174.0 784.0,203.6 M544.0,208.9Q664.0,180.3 784.0,208.9 M544.0,214.1Q664.0,186.7 784.0,214.1 M544.0,219.4Q664.0,193.0 784.0,219.4 M544.0,224.7Q664.0,199.3 784.0,224.7 M544.0,229.9Q664.0,205.7 784.0,229.9 M544.0,235.2Q664.0,212.0 784.0,235.2 M544.0,240.5Q664.0,218.3 784.0,240.5 M544.0,245.7Q664.0,224.7 784.0,245.7 M544.0,251.0Q664.0,231.0 784.0,251.0 M544.0,256.3Q664.0,237.3 784.0,256.3 M544.0,261.5Q664.0,243.7 784.0,261.5 M544.0,266.8Q664.0,250.0 784.0,266.8 M544.0,272.1Q664.0,256.3 784.0,272.1 M544.0,277.3Q664.0,262.7 784.0,277.3 M544.0,282.6Q664.0,269.0 784.0,282.6 M544.0,287.9Q664.0,275.3 784.0,287.9 M544.0,293.1Q664.0,281.7 784.0,293.1 M544.0,298.4Q664.0,288.0 784.0,298.4 M544.0,303.7Q664.0,294.3 784.0,303.7 M544.0,309.0Q664.0,300.6 784.0,309.0 M544.0,314.2Q664.0,307.0 784.0,314.2 M544.0,319.5Q664.0,313.3 784.0,319.5 M544.0,324.8Q664.0,319.6 784.0,324.8 M544.0,330.0Q664.0,326.0 784.0,330.0 M544.0,335.3Q664.0,332.3 784.0,335.3 M544.0,340.6Q664.0,338.6 784.0,340.6 M544.0,345.8Q664.0,345.0 784.0,345.8 M544.0,351.1Q664.0,351.3 784.0,351.1 M544.0,356.3Q664.0,357.7 784.0,356.3 M544.0,361.5Q664.0,364.1 784.0,361.5 M544.0,366.6Q664.0,370.6 784.0,366.6 M544.0,371.8Q664.0,377.0 784.0,371.8 M544.0,377.0Q664.0,383.4 784.0,377.0 M544.0,382.2Q664.0,389.8 784.0,382.2 M544.0,387.4Q664.0,396.2 784.0,387.4 M544.0,392.6Q664.0,402.6 784.0,392.6 M544.0,397.8Q664.0,409.0 784.0,397.8 M544.0,403.0Q664.0,415.4 784.0,403.0 M544.0,408.2Q664.0,421.8 784.0,408.2 M544.0,413.3Q664.0,428.3 784.0,413.3 M544.0,418.5Q664.0,434.7 784.0,418.5 M544.0,423.7Q664.0,441.1 784.0,423.7 M544.0,428.9Q664.0,447.5 784.0,428.9 M544.0,434.1Q664.0,453.9 784.0,434.1 M544.0,439.3Q664.0,460.3 784.0,439.3 M544.0,444.5Q664.0,466.7 784.0,444.5 M544.0,449.7Q664.0,473.1 784.0,449.7 M544.0,454.9Q664.0,479.5 784.0,454.9 M544.0,460.1Q664.0,485.9 784.0,460.1 M544.0,465.2Q664.0,492.4 784.0,465.2 M544.0,470.4Q664.0,498.8 784.0,470.4 M544.0,475.6Q664.0,505.2 784.0,475.6 M544.0,480.8Q664.0,511.6 784.0,480.8 M544.0,486.0Q664.0,518.0 784.0,486.0 M544.0,491.2Q664.0,524.4 784.0,491.2 M544.0,496.4Q664.0,530.8 784.0,496.4 M544.0,501.6Q664.0,537.2 784.0,501.6" clip-path="url(#cR)" fill="none" stroke="#a2d46a" stroke-width="1.4" stroke-opacity=".9"/>
<path d="M671.0,152.0 C672.8,155.0 677.6,163.7 682.0,170.0 C686.4,176.3 692.6,183.3 697.3,190.0 C702.1,196.7 706.5,203.3 710.6,210.0 C714.6,216.7 718.1,223.3 721.5,230.0 C724.9,236.7 728.1,243.3 731.1,250.0 C734.2,256.7 737.2,263.3 739.8,270.0 C742.5,276.7 744.9,283.3 747.0,290.0 C749.1,296.7 750.9,303.3 752.3,310.0 C753.8,316.7 755.0,323.3 755.8,330.0 C756.6,336.7 757.1,343.3 757.1,350.0 C757.1,356.7 756.7,363.3 756.0,370.0 C755.3,376.7 754.2,383.3 752.9,390.0 C751.5,396.7 750.0,403.3 748.0,410.0 C746.0,416.7 743.8,423.3 740.9,430.0 C738.0,436.7 734.7,443.3 730.6,450.0 C726.5,456.7 721.6,463.4 716.3,470.0 C711.1,476.6 704.9,483.4 699.2,489.3 C693.6,495.2 687.5,501.0 682.3,505.6 C677.2,510.1 672.5,513.5 668.3,516.4 C664.1,519.3 661.0,523.0 657.0,523.0 C653.0,523.0 649.0,519.3 644.2,516.4 C639.5,513.5 634.2,510.1 628.4,505.6 C622.7,501.0 615.9,495.2 609.8,489.3 C603.7,483.4 597.2,476.6 592.0,470.0 C586.7,463.4 582.0,456.7 578.2,450.0 C574.4,443.3 571.6,436.7 569.2,430.0 C566.8,423.3 565.3,416.7 563.8,410.0 C562.4,403.3 561.4,396.7 560.6,390.0 C559.8,383.3 559.3,376.7 559.1,370.0 C558.9,363.3 559.0,356.7 559.3,350.0 C559.7,343.3 560.3,336.7 561.2,330.0 C562.2,323.3 563.3,316.7 564.9,310.0 C566.5,303.3 568.4,296.7 570.7,290.0 C573.1,283.3 575.9,276.7 579.1,270.0 C582.2,263.3 585.8,256.7 589.5,250.0 C593.2,243.3 597.1,236.7 601.4,230.0 C605.7,223.3 610.1,216.7 615.2,210.0 C620.4,203.3 626.3,196.7 632.6,190.0 C638.9,183.3 646.6,176.3 653.0,170.0 C659.4,163.7 668.0,155.0 671.0,152.0 Z" fill="url(#shadeR)" stroke="#b3b070" stroke-width="1.6" stroke-opacity=".8"/>
<g fill="none" stroke="#b8dc7c" stroke-width="1.2" opacity=".4">
<path d="M448.6,263 L507,294.6"/><path d="M450.8,299 L525,348.6"/><path d="M453,340 L520,420"/>
<path d="M446,285.6 L403.6,335"/><path d="M450.8,330.6 L412.6,380"/><path d="M454,380 L410,440"/>
<path d="M660,240 L612,300"/><path d="M659,300 L590,360"/><path d="M658,380 L600,430"/>
<path d="M660,280 L715,230"/><path d="M659,340 L730,290"/><path d="M658,420 L720,370"/>
</g>
<path d="M450,170 C447,260 452,360 458,536" fill="none" stroke="#d2e488" stroke-width="1.8"/>
<path d="M670,155 Q661,190 660,230 L657.5,520" fill="none" stroke="#d2e488" stroke-width="1.8"/>
<path d="M450.0,169.0 C453.5,169.0 457.3,169.2 461.0,171.0 C464.7,172.8 467.8,176.8 472.0,180.0 C476.2,183.2 480.7,185.0 486.0,190.0 C491.3,195.0 498.2,203.3 503.6,210.0 C509.0,216.7 514.0,223.3 518.4,230.0 C522.9,236.7 526.7,243.3 530.2,250.0 C533.7,256.7 536.7,263.3 539.2,270.0 C541.7,276.7 543.8,283.3 545.3,290.0 C546.9,296.7 547.9,303.3 548.6,310.0 C549.4,316.7 549.7,323.3 549.8,330.0 C549.8,336.7 549.7,343.3 549.2,350.0 C548.7,356.7 548.0,363.3 546.9,370.0 C545.9,376.7 544.5,383.3 542.9,390.0 C541.3,396.7 539.5,403.3 537.5,410.0 C535.4,416.7 533.2,423.3 530.5,430.0 C527.8,436.7 524.8,443.3 521.2,450.0 C517.6,456.7 513.3,463.4 508.8,470.0 C504.4,476.6 499.4,483.4 494.7,489.9 C490.1,496.4 485.3,502.9 481.0,508.9 C476.7,515.0 472.7,520.7 468.9,526.0 C465.0,531.3 459.8,538.5 458.0,541.0 C456.2,538.5 451.2,531.3 447.3,526.0 C443.4,520.7 439.2,515.0 434.6,508.9 C430.0,502.9 424.9,496.4 419.8,489.9 C414.8,483.4 409.3,476.6 404.3,470.0 C399.4,463.4 394.5,456.7 390.2,450.0 C386.0,443.3 382.2,436.7 378.8,430.0 C375.4,423.3 372.7,416.7 370.0,410.0 C367.2,403.3 364.8,396.7 362.6,390.0 C360.4,383.3 358.3,376.7 356.6,370.0 C355.0,363.3 353.6,356.7 352.7,350.0 C351.8,343.3 351.3,336.7 351.1,330.0 C351.0,323.3 351.2,316.7 351.7,310.0 C352.2,303.3 353.0,296.7 354.4,290.0 C355.7,283.3 357.5,276.7 359.9,270.0 C362.3,263.3 365.4,256.7 369.0,250.0 C372.6,243.3 376.7,236.7 381.5,230.0 C386.2,223.3 391.7,216.7 397.4,210.0 C403.2,203.3 410.7,195.0 416.0,190.0 C421.3,185.0 425.0,183.2 429.0,180.0 C433.0,176.8 436.5,172.8 440.0,171.0 C443.5,169.2 446.5,169.0 450.0,169.0 Z" fill="url(#hazeT)"/>
<path d="M671.0,152.0 C672.8,155.0 677.6,163.7 682.0,170.0 C686.4,176.3 692.6,183.3 697.3,190.0 C702.1,196.7 706.5,203.3 710.6,210.0 C714.6,216.7 718.1,223.3 721.5,230.0 C724.9,236.7 728.1,243.3 731.1,250.0 C734.2,256.7 737.2,263.3 739.8,270.0 C742.5,276.7 744.9,283.3 747.0,290.0 C749.1,296.7 750.9,303.3 752.3,310.0 C753.8,316.7 755.0,323.3 755.8,330.0 C756.6,336.7 757.1,343.3 757.1,350.0 C757.1,356.7 756.7,363.3 756.0,370.0 C755.3,376.7 754.2,383.3 752.9,390.0 C751.5,396.7 750.0,403.3 748.0,410.0 C746.0,416.7 743.8,423.3 740.9,430.0 C738.0,436.7 734.7,443.3 730.6,450.0 C726.5,456.7 721.6,463.4 716.3,470.0 C711.1,476.6 704.9,483.4 699.2,489.3 C693.6,495.2 687.5,501.0 682.3,505.6 C677.2,510.1 672.5,513.5 668.3,516.4 C664.1,519.3 661.0,523.0 657.0,523.0 C653.0,523.0 649.0,519.3 644.2,516.4 C639.5,513.5 634.2,510.1 628.4,505.6 C622.7,501.0 615.9,495.2 609.8,489.3 C603.7,483.4 597.2,476.6 592.0,470.0 C586.7,463.4 582.0,456.7 578.2,450.0 C574.4,443.3 571.6,436.7 569.2,430.0 C566.8,423.3 565.3,416.7 563.8,410.0 C562.4,403.3 561.4,396.7 560.6,390.0 C559.8,383.3 559.3,376.7 559.1,370.0 C558.9,363.3 559.0,356.7 559.3,350.0 C559.7,343.3 560.3,336.7 561.2,330.0 C562.2,323.3 563.3,316.7 564.9,310.0 C566.5,303.3 568.4,296.7 570.7,290.0 C573.1,283.3 575.9,276.7 579.1,270.0 C582.2,263.3 585.8,256.7 589.5,250.0 C593.2,243.3 597.1,236.7 601.4,230.0 C605.7,223.3 610.1,216.7 615.2,210.0 C620.4,203.3 626.3,196.7 632.6,190.0 C638.9,183.3 646.6,176.3 653.0,170.0 C659.4,163.7 668.0,155.0 671.0,152.0 Z" fill="url(#hazeB)"/>
<path d="M763.6,155.5 L785,160 L785,155.5 L802,156.5 L802,165.5 Z" fill="#6e6e6e"/>
<path d="M763.6,155 L790,162" stroke="#6e6e6e" stroke-width="1.5"/>
<rect x="764" y="172.8" width="7" height="1.5" fill="#6e6e6e"/>
<path d="M350,547.5 L364,545.5 L364,556.5 L350,558 Z" fill="#6a6a6a"/>
<path d="M350,567 L360,566" stroke="#6a6a6a" stroke-width="1.5"/>
<path d="M375.7,566.5 L393,564.5 L395,568 L391,574 L375.7,575.5 Z" fill="#6a6a6a"/>
<path d="M392,568 C405,556 420,551 440,550.5 C480,549.5 540,549 582,548 C600,547 612,546.5 625,549.5 C640,552 650,556 670,561 C700,568 735,575 757.6,580.5" fill="none" stroke="#6e6e6e" stroke-width="1.8"/>
<path d="M376,604.5 C395,599 420,595.5 445,594.8 C500,593.5 540,589.5 585,588.5 C630,588.5 670,590.5 696.5,591.2" fill="none" stroke="#6e6e6e" stroke-width="1.8"/>
<path d="M705,606.5 C718,598 732,591.5 750,589" fill="none" stroke="#6e6e6e" stroke-width="3"/>
<path d="M750,588.8 L790,588.8" stroke="#6e6e6e" stroke-width="1.8"/>

</svg>
<svg class="a" style="left:760px;top:570px" width="60" height="40" viewBox="760 570 60 40"><text x="767.5" y="594.2" font-family="Liberation Sans" font-size="20" letter-spacing="1.1" fill="#e4e4e4" stroke="#e4e4e4" stroke-width=".35">jingy</text></svg>
<div id="menu" class="a">
 <div class="it">新建<i>(N)<u>...</u></i><b><i>Ctrl+N</i></b></div>
 <div class="it">打开<i>(O)<u>...</u></i><b><i>Ctrl+O</i></b></div>
 <div class="it">在<i> Bridge </i>中浏览<i>(B)<u>...</u></i><b><i>Alt+Ctrl+O</i></b></div>
 <div class="it">打开为<i><u>...</u></i><b><i>Alt+Shift+Ctrl+O</i></b></div>
 <div class="it">打开为智能对象<i><u>...</u></i></div>
 <div class="it">最近打开文件<i>(T)</i><span class="arr"></span></div>
 <div class="sep"></div>
 <div class="it">关闭<i>(C)</i><b><i>Ctrl+W</i></b></div>
 <div class="it">关闭全部<b><i>Alt+Ctrl+W</i></b></div>
 <div class="it">关闭并转到<i> Bridge<u>...</u></i><b><i>Shift+Ctrl+W</i></b></div>
 <div class="it hl">存储<i>(S)</i><b><i>Ctrl+S</i></b></div>
 <div class="it">存储为<i>(A)<u>...</u></i><b><i>Shift+Ctrl+S</i></b></div>
 <div class="it dis">签入<i>(I)<u>...</u></i></div>
 <div class="it">恢复<i>(V)</i><b><i>F12</i></b></div>
 <div class="sep"></div>
 <div class="it">导出<i>(E)</i><span class="arr"></span></div>
 <div class="it">生成<span class="arr"></span></div>
 <div class="it">在<i> Behance </i>上共享<i>(D)<u>...</u></i></div>
 <div class="sep"></div>
 <div class="it">搜索<i> Adobe Stock<u>...</u></i></div>
 <div class="it">置入嵌入的智能对象<i>(L)<u>...</u></i></div>
 <div class="it">置入链接的智能对象<i>(K)<u>...</u></i></div>
 <div class="it dis">打包<i>(G)<u>...</u></i></div>
 <div class="sep"></div>
 <div class="it">自动<i>(U)</i><span class="arr"></span></div>
 <div class="it">脚本<i>(R)</i><span class="arr"></span></div>
 <div class="it">导入<i>(M)</i><span class="arr"></span></div>
 <div class="sep"></div>
 <div class="it lo">文件简介<i>(F)<u>...</u></i><b><i>Alt+Shift+Ctrl+I</i></b></div>
 <div class="sep"></div>
 <div class="it lo">打印<i>(P)<u>...</u></i><b><i>Ctrl+P</i></b></div>
 <div class="it lo">打印一份<i>(Y)</i><b><i>Alt+Shift+Ctrl+P</i></b></div>
 <div class="sep"></div>
 <div class="it lo">退出<i>(X)</i><b><i>Ctrl+Q</i></b></div>
</div>
<div class="a" style="left:26px;top:180px;width:118px;height:16px;border:2px solid #d4243a"></div>

</body></html>
